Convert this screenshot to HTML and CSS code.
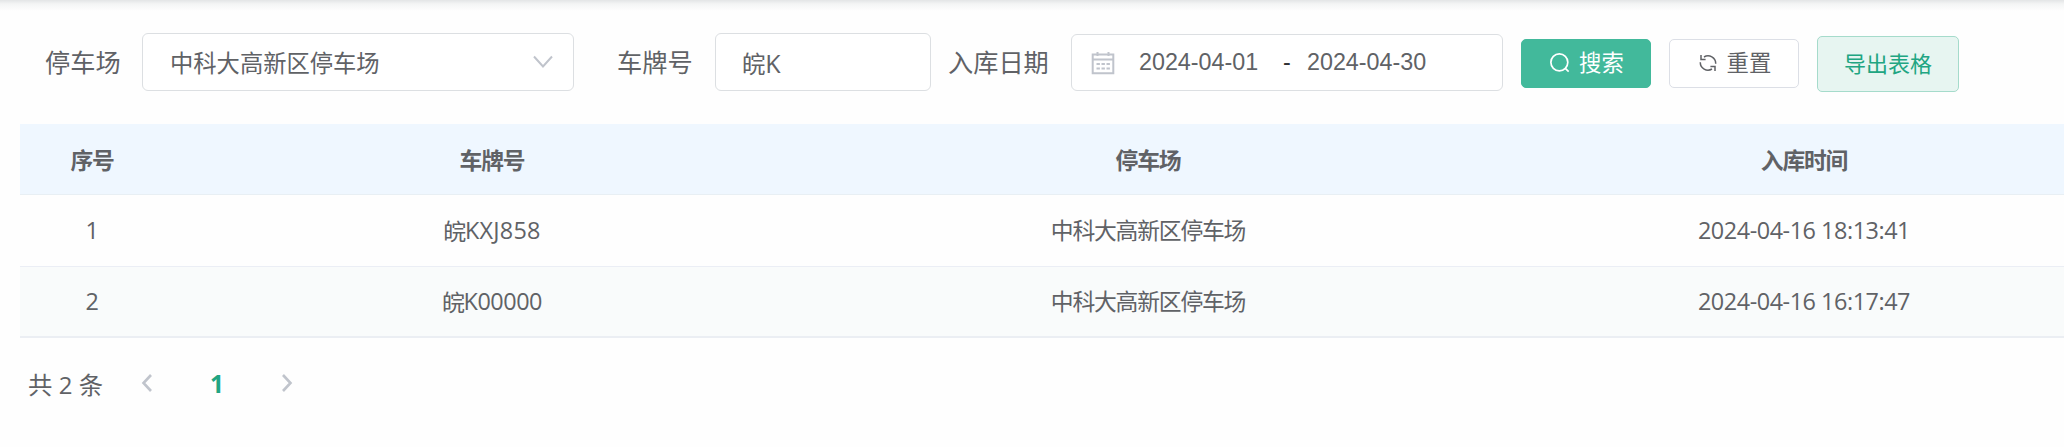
FILE: index.html
```html
<!DOCTYPE html>
<html lang="zh-CN">
<head>
<meta charset="utf-8">
<title>停车记录</title>
<link rel="stylesheet" href="styles.css">
</head>
<body>
<main class="page">
  <form class="filters">
    <label class="label label-lot">停车场</label>
    <div class="field select"><span class="value">中科大高新区停车场</span>
      <svg class="arrow" width="20" height="14" viewBox="0 0 20 14"><path d="M1 1.5 10 11.5 19 1.5"/></svg>
    </div>
    <label class="label label-plate">车牌号</label>
    <div class="field plate"><span class="value">皖<span class="k">K</span></span></div>
    <label class="label label-date">入库日期</label>
    <div class="field range">
      <svg class="calendar" width="24" height="24" viewBox="0 0 24 24"><path d="M1.7 3.5h20.6v18.7H1.7zM1.7 8.5h20.6M6.5 1v4M17.5 1v4"/><path class="dots" d="M5.5 13h3.4M10.5 13h3.4M15.5 13h3.4M5.5 17.6h3.4M10.5 17.6h3.4M15.5 17.6h3.4"/></svg>
      <span class="date">2024-04-01</span><span class="dash">-</span><span class="date">2024-04-30</span>
    </div>
    <button type="button" class="btn primary">
      <svg width="20" height="20" viewBox="0 0 21 21"><circle cx="9.8" cy="9.8" r="8.9"/><path d="M15.8 16 19.6 19.6"/></svg><span>搜索</span>
    </button>
    <button type="button" class="btn reset">
      <svg width="18" height="18" viewBox="0 0 18 18"><path d="M2 1v4.5h4.6M5 3A7.7 7.7 0 0 1 16.7 9.8M16 17v-4.5h-4.6M13 15A7.7 7.7 0 0 1 1.3 8.2"/></svg><span>重置</span>
    </button>
    <button type="button" class="btn export"><span>导出表格</span></button>
  </form>
  <div class="table">
    <div class="row head"><span>序号</span><span>车牌号</span><span>停车场</span><span>入库时间</span></div>
    <div class="row"><span class="num">1</span><span>皖<span class="num mixed">KXJ858</span></span><span>中科大高新区停车场</span><span class="num">2024-04-16 18:13:41</span></div>
    <div class="row striped"><span class="num">2</span><span>皖<span class="num">K00000</span></span><span>中科大高新区停车场</span><span class="num">2024-04-16 16:17:47</span></div>
  </div>
  <nav class="pager">
    <span class="total">共 <span class="two">2</span> 条</span>
    <svg width="12" height="20" viewBox="0 0 12 20"><path d="M10 2 2.5 10 10 18"/></svg>
    <span class="current">1</span>
    <svg width="12" height="20" viewBox="0 0 12 20"><path d="M2 2 9.5 10 2 18"/></svg>
  </nav>
</main>
</body>
</html>
```
FILE: styles.css
```css
* { box-sizing: border-box; }
body { margin: 0; background: #fefefe; font-family: "Open Sans", "Noto Sans CJK SC", sans-serif; color: #606266; }
svg { fill: none; stroke: currentColor; flex: none; }
.page { height: 447px; overflow: hidden; background: linear-gradient(#e3e5e6, #f4f5f5 4px, #fefefe 11px); }
.filters { display: flex; align-items: center; height: 124px; padding-left: 45px; white-space: nowrap; }
.label { font-size: 25.2px; line-height: 36px; }
.label-lot { width: 97px; }
.label-plate { margin-left: 43px; width: 98px; }
.label-date { margin-left: 17px; width: 123px; }
.field { height: 58px; border: 1px solid #dcdfe2; border-radius: 6px; background: #fff; display: flex; align-items: center; }
.value { font-size: 23.3px; line-height: 34px; padding-top: 2px; }
.select { width: 432px; padding: 0 20px 0 27px; justify-content: space-between; }
.arrow { color: #c0c4cc; stroke-width: 2; }
.plate { width: 216px; padding-left: 26px; }
.k { font-size: 25px; }
.range { width: 432px; height: 57px; margin-top: 1px; padding-left: 19px; font-family: "Liberation Sans", sans-serif; font-size: 23.3px; }
.calendar { color: #c0c4cc; stroke-width: 2; margin-right: 24px; }
.date { width: 119px; }
.dash { width: 49px; padding-left: 25px; color: #303133; }
.btn { display: flex; align-items: center; justify-content: center; flex: none; padding: 0 0 2px; height: 49px; margin-top: 3px; border: 1px solid #dcdfe6; border-radius: 5px; background: #fff; color: #606266; font-family: inherit; font-size: 22.4px; line-height: 32px; }
.primary { width: 130px; margin-left: 18px; padding-left: 2px; background: #42b99b; border-color: #42b99b; color: #fff; gap: 9px; stroke-width: 1.8; }
.reset { width: 130px; margin-left: 18px; padding-left: 2px; gap: 10px; stroke-width: 1.5; }
.export { width: 142px; height: 56px; margin-left: 18px; margin-top: 4px; background: #e7f5f1; border-color: #a5dbcb; color: #21a582; font-size: 22px; }
.table { margin-left: 20px; }
.row { display: grid; grid-template-columns: 144px 656px 656px 656px; height: 72px; border-bottom: 1px solid #ebeef5; align-items: center; text-align: center; font-size: 22.8px; letter-spacing: -1.2px; line-height: 34px; padding-top: 1px; }
.head { height: 71px; background: #eff7ff; font-weight: 700; border-color: #e8eff4; padding-top: 3px; }
.striped { height: 71px; background: #f9fbfb; border-bottom: 2px solid #ebeef3; }
.num { font-size: 23.4px; letter-spacing: -.45px; position: relative; top: -1px; }
.mixed { letter-spacing: .25px; }
.pager { display: flex; align-items: center; height: 94px; padding: 0 0 4px 28px; color: #c0c4cc; stroke-width: 2.6; }
.total { width: 113px; color: #606266; font-size: 24.4px; white-space: nowrap; }
.two { font-size: 24px; }
.current { width: 128px; text-align: center; color: #21a582; font-weight: 700; font-size: 24.5px; }
```
